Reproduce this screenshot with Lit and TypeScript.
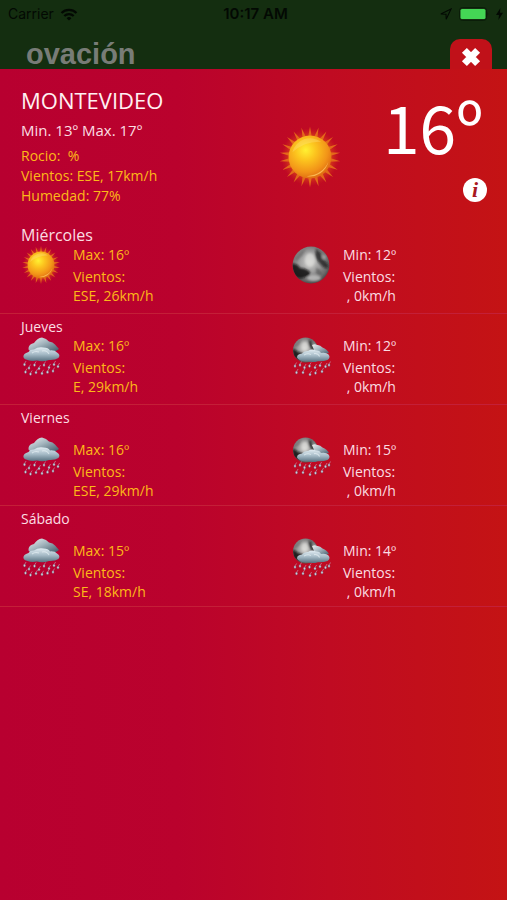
import { LitElement, html, svg, css } from "lit";
import { customElement, property } from "lit/decorators.js";
import { classMap } from "lit/directives/class-map.js";

type Sky = "sun" | "moon" | "rain" | "night-rain";

interface Reading {
  sky: Sky;
  label: string;
  temp: string;
  wind: string;
}

interface Forecast {
  name: string;
  layout: "lead" | "tight" | "roomy";
  day: Reading;
  night: Reading;
}

const reading = (sky: Sky, label: string, temp: string, wind: string): Reading => ({ sky, label, temp, wind });

const FORECAST: Forecast[] = [
  {
    name: "Miércoles",
    layout: "lead",
    day: reading("sun", "Max", "16º", "ESE, 26km/h"),
    night: reading("moon", "Min", "12º", " , 0km/h"),
  },
  {
    name: "Jueves",
    layout: "tight",
    day: reading("rain", "Max", "16º", "E, 29km/h"),
    night: reading("night-rain", "Min", "12º", " , 0km/h"),
  },
  {
    name: "Viernes",
    layout: "roomy",
    day: reading("rain", "Max", "16º", "ESE, 29km/h"),
    night: reading("night-rain", "Min", "15º", " , 0km/h"),
  },
  {
    name: "Sábado",
    layout: "roomy",
    day: reading("rain", "Max", "15º", "SE, 18km/h"),
    night: reading("night-rain", "Min", "14º", " , 0km/h"),
  },
];

const RAYS = Array.from({ length: 22 }, (_, i) => (i * 360) / 22);

@customElement("weather-icon")
export class WeatherIcon extends LitElement {
  @property() kind: Sky = "sun";

  static styles = css`
    :host {
      display: block;
      flex: none;
    }
    .art {
      display: block;
      width: 100%;
      height: 100%;
    }
  `;

  private sun() {
    return svg`
      <defs>
        <radialGradient id="disc" cx="0.4" cy="0.34" r="0.68">
          <stop offset="0" stop-color="#fff032" />
          <stop offset="0.35" stop-color="#fcc41e" />
          <stop offset="0.75" stop-color="#f29418" />
          <stop offset="1" stop-color="#e06c12" />
        </radialGradient>
        <radialGradient id="halo">
          <stop offset="0.6" stop-color="#f07a14" stop-opacity="0.75" />
          <stop offset="1" stop-color="#d83a14" stop-opacity="0" />
        </radialGradient>
      </defs>
      <circle cx="20" cy="20" r="18" fill="url(#halo)" />
      ${RAYS.map((a) => svg`<path d="M18.8 8 L20 1 L21.2 8 Z" fill="#e4691a" transform="rotate(${a} 20 20)" />`)}
      <circle cx="20" cy="20" r="13.4" fill="url(#disc)" />
      <path d="M31.5 23 A12 12 0 0 1 18 32 Q28 31 31.5 23 Z" fill="#ffc860" opacity="0.8" />
      <path d="M9 17 A11.5 11.5 0 0 1 27 10.5 Q17 10 9 17 Z" fill="#ffe680" opacity="0.35" />
    `;
  }

  private moonDisc(cx: number, cy: number, r: number) {
    return svg`
      <defs>
        <radialGradient id="moon" cx="0.46" cy="0.42" r="0.6">
          <stop offset="0" stop-color="#cfcfcd" />
          <stop offset="0.5" stop-color="#999" />
          <stop offset="0.85" stop-color="#666" />
          <stop offset="1" stop-color="#444" />
        </radialGradient>
        <filter id="soft"><feGaussianBlur stdDeviation="1.3" /></filter>
        <clipPath id="rim"><circle cx="20" cy="20" r="18.4" /></clipPath>
      </defs>
      <g transform="translate(${cx} ${cy}) scale(${r / 18.4}) translate(-20 -20)">
        <circle cx="20" cy="20" r="18.4" fill="url(#moon)" />
        <g clip-path="url(#rim)"><g filter="url(#soft)">
          <path d="M0 19 Q6 18 9 23 Q15 23 19 27 Q20 32 14 32 Q8 36 2 30 Z" fill="#111" opacity="0.85" />
          <path d="M25 4 Q31 7 31 13 Q35 16 38 21 Q35 26 30 20 Q25 15 24 11 Z" fill="#1c1c1c" opacity="0.75" />
          <path d="M4 14 Q9 6 15 4 Q12 11 6 16 Z" fill="#555" opacity="0.5" />
          <path d="M25 23 Q30 24 31 29 Q27 32 25 28 Z" fill="#555" opacity="0.6" />
          <ellipse cx="19" cy="15" rx="5" ry="7" fill="#dededb" opacity="0.7" />
          <ellipse cx="23" cy="33" rx="7" ry="3" fill="#ccc" opacity="0.7" />
          <ellipse cx="33" cy="12" rx="2" ry="2" fill="#aaa" opacity="0.8" />
        </g></g>
      </g>
    `;
  }

  private drops(points: number[][]) {
    return points.map(
      ([x, y]) => svg`
        <path d="M${x + 1.6} ${y - 3} L${x - 0.3} ${y}" stroke="#c58ba4" stroke-width="0.9" opacity="0.8" />
        <ellipse cx="${x}" cy="${y + 0.6}" rx="1.1" ry="1.4" fill="#c9d0dc" stroke="#6d4a64" stroke-width="0.4" />
      `
    );
  }

  private cloudPaint() {
    return svg`
      <defs>
        <linearGradient id="cloud" x1="0" y1="0" x2="0" y2="1">
          <stop offset="0" stop-color="#e2edf3" />
          <stop offset="0.5" stop-color="#a5bac6" />
          <stop offset="1" stop-color="#56707f" />
        </linearGradient>
        <linearGradient id="back" x1="0" y1="0" x2="1" y2="1">
          <stop offset="0" stop-color="#eef1f2" />
          <stop offset="0.45" stop-color="#a3b4bd" />
          <stop offset="1" stop-color="#3c5564" />
        </linearGradient>
      </defs>
    `;
  }

  private rain() {
    return svg`
      ${this.cloudPaint()}
      <path d="M7.5 12 Q8 8 13 7 Q16 2 21 1.4 Q25.5 2.5 28 5.4 Q32 6 34 8.5 L38 13 Q34 17 27 15.5 L9 15 Q7 14 7.5 12 Z" fill="url(#back)" />
      <path d="M2.4 21 Q2 17.5 7.5 16 Q9 13.4 13 13.6 Q17 10.4 22.5 11.4 Q27.5 11.4 29 14.4 Q34 14 36 16.6 Q40 19 37.4 22 Q34 24.4 28 24 Q22 26.4 16 24.6 Q10 25.4 6.6 24 Q3 23.4 2.4 21 Z" fill="url(#cloud)" />
      <path d="M11 17 Q14 14.6 18 16 M21 15 Q26 14 28 18" fill="none" stroke="#edf5f8" stroke-width="1.1" opacity="0.6" />
      ${this.drops([[3.5, 28], [8, 31.5], [13.5, 28.5], [18, 32], [23, 28.5], [28, 31], [33, 28], [37, 30], [4.5, 35.5], [9.5, 37.5], [15, 36], [21, 36.8], [26.5, 35.6], [32, 34.5]])}
    `;
  }

  private nightRain() {
    return svg`
      ${this.moonDisc(14.5, 14, 12.5)}
      ${this.cloudPaint()}
      <path d="M21 9 Q24 7.6 26 9 Q29 8.6 31.5 11.5 Q36 13 38 17 L30 19 L23 14 Z" fill="url(#back)" />
      <path d="M6 21.4 Q6 18 11 17.6 Q13 14.6 17 15 Q21 12.4 25 14.6 Q28.6 14.4 30 17 Q35 16 37.5 18.6 Q40 21.5 36.5 24 Q32 25.6 27 25.2 Q21 27 16 25 Q8 25.4 6 21.4 Z" fill="url(#cloud)" />
      <path d="M13 19 Q17 16.6 20 18.6 M23 17.6 Q27 17 28.6 20.4" fill="none" stroke="#edf5f8" stroke-width="1.1" opacity="0.6" />
      ${this.drops([[4, 29.5], [9, 28.5], [13.5, 31], [18.5, 29.5], [24, 31], [29, 29], [34.5, 30], [38, 28.5], [5.5, 36], [12, 36], [19, 38], [24.5, 36.5], [31, 35]])}
    `;
  }

  private body() {
    switch (this.kind) {
      case "sun":
        return this.sun();
      case "moon":
        return this.moonDisc(20, 20, 18.4);
      case "rain":
        return this.rain();
      default:
        return this.nightRain();
    }
  }

  render() {
    return html`<svg class="art" viewBox="0 0 40 40" aria-hidden="true">${this.body()}</svg>`;
  }
}

@customElement("app-root")
export class AppRoot extends LitElement {
  static styles = css`
    :host {
      display: flex;
      flex-direction: column;
      min-height: 100vh;
      background: #142e10;
      font-family: "Open Sans", "Noto Sans", sans-serif;
      color: #fbdde2;
    }
    .status {
      display: grid;
      grid-template-columns: 1fr auto 1fr;
      align-items: center;
      height: 28px;
      padding: 0 4px 0 8px;
      box-sizing: border-box;
      font: 400 14px/28px Inter, sans-serif;
      color: #030903;
    }
    .carrier,
    .power {
      display: flex;
      align-items: center;
      gap: 6px;
    }
    .power {
      justify-content: flex-end;
    }
    .time {
      font-weight: 600;
      font-size: 15px;
    }
    .brand {
      display: flex;
      justify-content: space-between;
      align-items: flex-end;
      height: 41px;
      padding: 0 15px 0 26px;
    }
    .logo {
      margin: 0;
      font: 700 29px/30px "Liberation Sans", sans-serif;
      color: #787c77;
    }
    .close {
      display: flex;
      justify-content: center;
      align-items: center;
      width: 42px;
      height: 30px;
      padding: 6px 0 0;
      box-sizing: border-box;
      border: 0;
      border-radius: 10px 10px 0 0;
      background: #c01119;
    }
    .panel {
      flex: 1;
      background: linear-gradient(90deg, #b80030 0%, #ba022d 35%, #c00b22 65%, #c41314 100%);
    }
    .now {
      display: grid;
      grid-template-columns: 5fr 4fr;
      padding: 17px 0 19px 21px;
    }
    .city {
      margin: 0;
      font-weight: 400;
      font-size: 22px;
      line-height: 28px;
      color: #fff0f2;
    }
    .range {
      margin: 6px 0;
      font-size: 15px;
      line-height: 20px;
    }
    .facts {
      margin: 0;
      padding: 0;
      list-style: none;
      font-size: 14px;
      line-height: 20px;
      color: #fcb918;
      white-space: pre;
    }
    .current {
      display: flex;
      justify-content: space-between;
      padding-right: 20px;
    }
    .big {
      width: 64px;
      height: 64px;
      margin: 39px 0 0 -13px;
    }
    .side {
      display: flex;
      flex-direction: column;
      align-items: flex-end;
    }
    .temp {
      margin: 0 4px 0 0;
      font: 400 66px/78px "Noto Sans CJK SC", "Open Sans", sans-serif;
      color: #fff;
    }
    .info {
      display: grid;
      place-items: center;
      width: 24px;
      height: 24px;
      margin-top: 14px;
      padding: 0;
      border: 0;
      border-radius: 50%;
      background: #fff;
      font: italic 700 22px/24px "Liberation Serif", serif;
      color: #a81822;
    }
    .day {
      border-bottom: 1px solid #c41f38;
    }
    .name {
      margin: 0;
      padding: 4px 0 0 21px;
      font-weight: 400;
      font-size: 14px;
      line-height: 18px;
    }
    .pair {
      display: grid;
      grid-template-columns: 5fr 4fr;
      padding: 0 0 8px 21px;
    }
    .lead .name {
      padding-top: 0;
      font-size: 16px;
      line-height: 20px;
    }
    .roomy .pair {
      padding: 9px 0 5px 21px;
    }
    .roomy .lines {
      padding-top: 4px;
    }
    .reading {
      display: flex;
      gap: 12px;
    }
    .small {
      width: 40px;
      height: 40px;
    }
    .lines {
      font-size: 14px;
      line-height: 19px;
      white-space: pre;
    }
    .lines p {
      margin: 0;
    }
    .lines .peak {
      margin-bottom: 3px;
    }
    .warm {
      color: #fcb918;
    }
  `;

  private reading(r: Reading, warm: boolean) {
    return html`<div class=${classMap({ reading: true, warm })}>
      <weather-icon class="small" .kind=${r.sky}></weather-icon>
      <div class="lines"><p class="peak">${r.label}: ${r.temp}</p><p>Vientos:</p><p>${r.wind}</p></div>
    </div>`;
  }

  render() {
    return html`
      <div class="status">
        <div class="carrier">
          <span>Carrier</span>
          <svg width="18" height="13" viewBox="0 0 18 13" fill="none" stroke="currentColor" stroke-width="2.2" aria-hidden="true">
            <path d="M1.5 5 A10.6 10.6 0 0 1 16.5 5" />
            <path d="M4.3 8 A6.6 6.6 0 0 1 13.7 8" />
            <path d="M9 12.6 L6.6 10.2 A3.4 3.4 0 0 1 11.4 10.2 Z" fill="currentColor" stroke="none" />
          </svg>
        </div>
        <span class="time">10:17 AM</span>
        <div class="power">
          <svg width="12" height="12" viewBox="0 0 12 12" aria-hidden="true">
            <path d="M0.8 6 L11 1 L6.2 11.2 L6 6.2 Z" fill="none" stroke="currentColor" stroke-width="1.1" />
          </svg>
          <svg width="32" height="14" viewBox="0 0 32 14" aria-hidden="true">
            <rect x="1.5" y="0.5" width="27" height="13" rx="3" fill="none" stroke="#0b1d09" />
            <rect x="2.5" y="2" width="25" height="10" rx="1.5" fill="#44d655" />
            <path d="M29.5 4.5 Q31 7 29.5 9.5 Z" fill="#0b1d09" />
          </svg>
          <svg width="7" height="12" viewBox="0 0 7 12" aria-hidden="true">
            <path d="M4.4 0 L0 7 H3 L2.4 12 L7 4.8 H4 Z" fill="currentColor" />
          </svg>
        </div>
      </div>
      <header class="brand">
        <h1 class="logo">ovación</h1>
        <button class="close" type="button" aria-label="Cerrar">
          <svg width="22" height="20" viewBox="0 0 22 20" aria-hidden="true">
            <path d="M4.4 3.4 L17.6 16.6 M17.6 3.4 L4.4 16.6" stroke="#fff" stroke-width="7" />
          </svg>
        </button>
      </header>
      <main class="panel">
        <section class="now">
          <div>
            <h2 class="city">MONTEVIDEO</h2>
            <p class="range">Min. 13º Max. 17º</p>
            <ul class="facts"><li>Rocio:  %</li><li>Vientos: ESE, 17km/h</li><li>Humedad: 77%</li></ul>
          </div>
          <div class="current">
            <weather-icon class="big" .kind=${"sun"}></weather-icon>
            <div class="side">
              <p class="temp">16º</p>
              <button class="info" type="button" aria-label="Información">i</button>
            </div>
          </div>
        </section>
        ${FORECAST.map(
          (f) => html`<section class="day ${f.layout}">
            <h3 class="name">${f.name}</h3>
            <div class="pair">${this.reading(f.day, true)}${this.reading(f.night, false)}</div>
          </section>`
        )}
      </main>
    `;
  }
}
